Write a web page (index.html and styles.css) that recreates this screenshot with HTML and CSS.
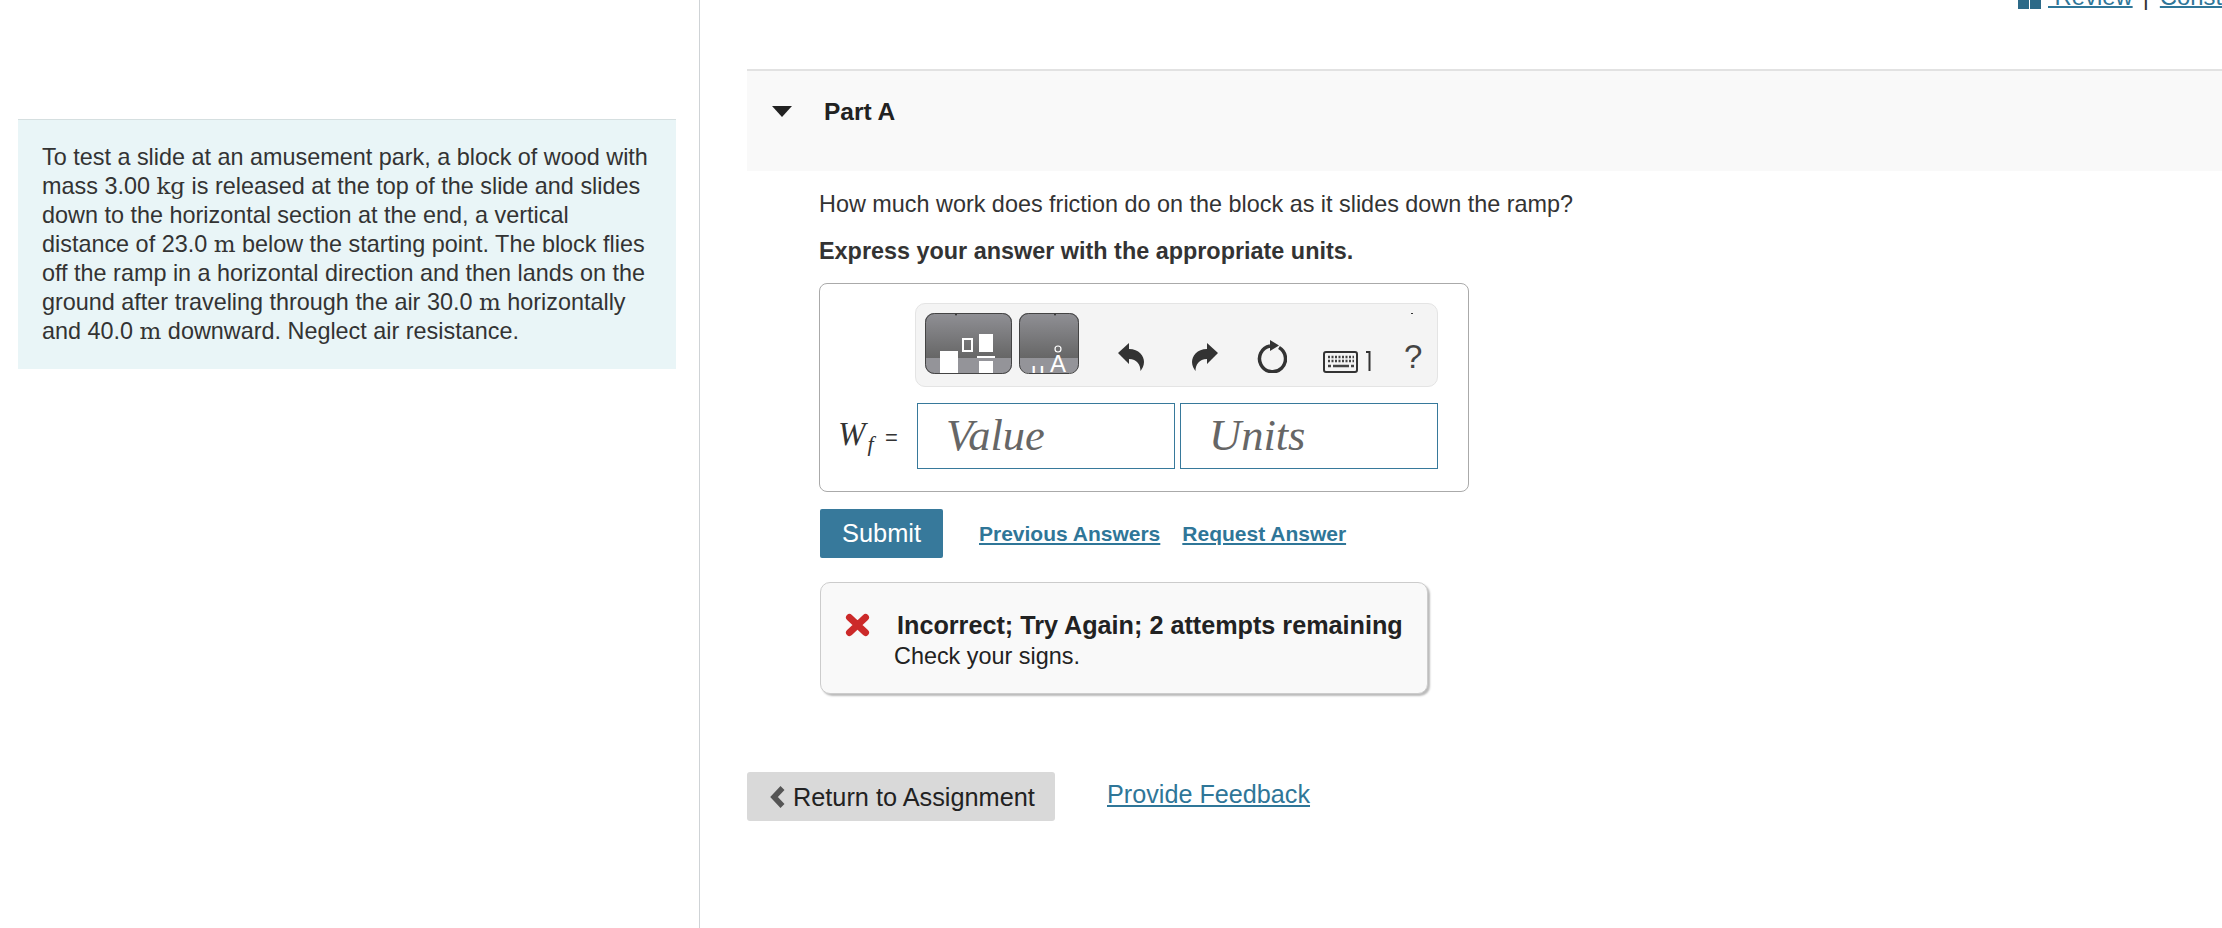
FILE: index.html
```html
<!DOCTYPE html>
<html lang="en">
<head>
  <meta charset="UTF-8" />
  <title>Part A</title>
  <link rel="stylesheet" href="styles.css">
</head>
<body>
  <div class="left-pane">
    <div class="intro">
      To test a slide at an amusement park, a block of wood with mass 3.00 <span class="unit">kg</span> is released at the top of the slide and slides down to the horizontal section at the end, a vertical distance of 23.0 <span class="unit">m</span> below the starting point. The block flies off the ramp in a horizontal direction and then lands on the ground after traveling through the air 30.0 <span class="unit">m</span> horizontally and 40.0 <span class="unit">m</span> downward. Neglect air resistance.
    </div>
  </div>

  <div class="right-pane">
    <div class="top-links">
      <svg class="book" width="23" height="9" viewBox="0 0 23 9"><path d="M0 0h11v9H0zM12 0h11v9H12z" fill="#2c6a88"/></svg>
      <a href="#">&nbsp;Review</a>
      <span class="sep">|</span>
      <a href="#">Constants</a>
    </div>

    <div class="part-head">
      <span class="caret"></span>
      <h2 class="part-title">Part A</h2>
    </div>

    <div class="part-body">
      <p class="question">How much work does friction do on the block as it slides down the ramp?</p>
      <p class="instruction">Express your answer with the appropriate units.</p>

      <div class="answer-box">
        <div class="toolbar">
          <svg class="palette" width="87" height="61" viewBox="0 0 87 61">
            <defs>
              <linearGradient id="grad1" x1="0" y1="0" x2="0" y2="1">
                <stop offset="0" stop-color="#909095"/>
                <stop offset="1" stop-color="#666666"/>
              </linearGradient>
            </defs>
            <rect width="87" height="61" rx="9" fill="#949499"/>
            <path d="M9 0h69a9 9 0 0 1 9 9v36H0V9a9 9 0 0 1 9-9z" fill="url(#grad1)"/>
            <rect x="15" y="38" width="18" height="23" fill="#fff"/>
            <rect x="38" y="26" width="9" height="12" fill="none" stroke="#fff" stroke-width="2"/>
            <rect x="54" y="21" width="14" height="18" fill="#fff"/>
            <rect x="52" y="43" width="18" height="2" fill="#fff"/>
            <rect x="54" y="48" width="14" height="13" fill="#fff"/>
            <circle cx="31" cy="1.5" r="1" fill="#333"/>
            <rect x="0.5" y="0.5" width="86" height="60" rx="9" fill="none" stroke="#444"/>
          </svg>
          <svg class="palette palette-units" width="60" height="61" viewBox="0 0 60 61">
            <defs>
              <clipPath id="clip2"><rect width="60" height="60" rx="9"/></clipPath>
            </defs>
            <g clip-path="url(#clip2)">
              <rect width="60" height="61" fill="#949499"/>
              <rect width="60" height="45" fill="url(#grad1)"/>
              <text class="palette-text" x="12" y="66">μ</text>
              <text class="palette-text" x="39" y="59" text-anchor="middle">A</text>
              <circle cx="39" cy="36" r="3" fill="none" stroke="#fff" stroke-width="1.200"/>
            </g>
            <circle cx="36" cy="1.5" r="1" fill="#333"/>
            <rect x="0.5" y="0.5" width="59" height="60" rx="9" fill="none" stroke="#444"/>
          </svg>
          <svg class="tool-undo" width="26" height="28" viewBox="0 0 26 28"><path d="M0 10L11 0V6C21 6 26 13 26 19C26 23 24 26 22.500 28C22.500 22 19 16 11 16V21Z" fill="#333"/></svg>
          <svg class="tool-redo" width="26" height="28" viewBox="0 0 26 28"><path d="M26 10L15 0V6C5 6 0 13 0 19C0 23 2 26 3.500 28C3.500 22 7 16 15 16V21Z" fill="#333"/></svg>
          <svg class="tool-reset" width="30" height="34" viewBox="0 0 30 34">
            <path d="M22 8.500A13 13 0 1 1 13 7" fill="none" stroke="#333" stroke-width="3.500"/>
            <path d="M13 1L22 6.500L13 12Z" fill="#333"/>
          </svg>
          <svg class="tool-keys" width="36" height="22" viewBox="0 0 36 22">
            <rect x="1" y="1" width="33" height="20" rx="2" fill="#f4f4f4" stroke="#333" stroke-width="2"/>
            <path d="M5 6h26M5 10h26" stroke="#444" stroke-width="2.400" stroke-dasharray="2 1.500"/>
            <path d="M5 15h3M10 15h16M28 15h3" stroke="#444" stroke-width="2.400"/>
          </svg>
          <svg class="tool-bracket" width="5" height="20" viewBox="0 0 5 20"><path d="M0 1h3.500V20" fill="none" stroke="#333" stroke-width="2"/></svg>
          <span class="tool-help">?</span>
          <span class="tool-dot"></span>
        </div>

        <div class="input-row">
          <label class="math-label"><i>W</i><i class="math-sub">f</i> <span class="eq">=</span></label>
          <input class="math-input" type="text" placeholder="Value">
          <input class="math-input" type="text" placeholder="Units">
        </div>
      </div>

      <div class="action-row">
        <button class="submit-btn">Submit</button>
        <a class="action-link" href="#">Previous Answers</a>
        <a class="action-link" href="#">Request Answer</a>
      </div>

      <div class="feedback">
        <svg class="x-icon" width="25" height="24" viewBox="0 0 25 24"><path d="M4.500 4.500L20.500 19.500M20.500 4.500L4.500 19.500" fill="none" stroke="#cc2a2a" stroke-width="7" stroke-linecap="round"/></svg>
        <div>
          <div class="feedback-title">Incorrect; Try Again; 2 attempts remaining</div>
          <div class="feedback-text">Check your signs.</div>
        </div>
      </div>
    </div>

    <div class="footer-row">
      <button class="return-btn">
        <svg width="15" height="22" viewBox="0 0 15 22"><path d="M12.500 2L4 11L12.500 20" fill="none" stroke="#555" stroke-width="5.500"/></svg>
        Return to Assignment
      </button>
      <a class="feedback-link" href="#">Provide Feedback</a>
    </div>
  </div>
</body>
</html>
```

FILE: styles.css
```css
* {
  box-sizing: border-box;
}

body {
  margin: 0;
  height: 100vh;
  overflow: hidden;
  display: flex;
  background-color: #fff;
  font-family: "Liberation Sans", Arial, sans-serif;
  font-size: 23.4px;
  line-height: 29px;
  color: #333;
}

a {
  color: #2f7698;
}

/* left column */
.left-pane {
  flex: 0 0 700px;
  padding: 119px 23px 0 18px;
  border-right: 1px solid #cfd3d6;
}

.intro {
  height: 250px;
  padding: 23px 20px 0 24px;
  background-color: #e9f5f7;
  border-top: 1px solid #d5dfe0;
}

.unit {
  font-family: "DejaVu Serif", serif;
  font-size: 23px;
  line-height: 0;
}

/* right column */
.right-pane {
  flex: 1;
  min-width: 0;
  overflow: hidden;
  padding-left: 47px;
}

.top-links {
  height: 11px;
  padding-left: 1271px;
  display: flex;
  align-items: flex-end;
  white-space: nowrap;
  overflow: hidden;
  font-size: 23.8px;
  line-height: 29px;
}

.top-links a {
  flex: none;
  text-decoration: underline;
  text-decoration-thickness: 2px;
}

.book {
  flex: none;
  margin-bottom: 2px;
  margin-right: 7px;
}

.sep {
  flex: none;
  margin: 0 11px 0 10px;
}

.part-head {
  margin-top: 58px;
  height: 102px;
  padding: 26px 0 0 25px;
  display: flex;
  align-items: flex-start;
  background-color: #f9f9f9;
  border-top: 2px solid #e2e2e2;
}

.caret {
  margin-top: 9px;
  width: 0;
  height: 0;
  border-left: 10px solid transparent;
  border-right: 10px solid transparent;
  border-top: 11px solid #222;
}

.part-title {
  margin: 0 0 0 32px;
  font-size: 24.5px;
  line-height: 29px;
  color: #222;
}

.part-body {
  padding: 19px 0 0 72px;
}

.question {
  margin: 0 0 18px;
}

.instruction {
  margin: 0 0 17px;
  font-weight: bold;
}

.answer-box {
  width: 650px;
  height: 209px;
  padding: 19px 30px 0 0;
  display: flex;
  flex-direction: column;
  align-items: flex-end;
  gap: 16px;
  border: 1px solid #aaa;
  border-radius: 8px;
}

.toolbar {
  position: relative;
  width: 523px;
  height: 84px;
  padding: 9px 0 0 9px;
  display: flex;
  align-items: flex-start;
  background-color: #f4f4f4;
  border: 1px solid #e4e4e4;
  border-radius: 10px;
}

.toolbar svg {
  flex: none;
}

.palette-units {
  margin-left: 7px;
}

.palette-text {
  font-family: "Liberation Sans", sans-serif;
  font-size: 24px;
  fill: #fff;
}

.tool-undo {
  margin: 30px 0 0 39px;
}

.tool-redo {
  margin: 30px 0 0 48px;
}

.tool-reset {
  margin: 26px 0 0 39px;
}

.tool-keys {
  margin: 38px 0 0 36px;
}

.tool-bracket {
  margin: 38px 0 0 7px;
}

.tool-help {
  margin: 26px 0 0 33px;
  font-size: 33px;
  line-height: 36px;
  color: #444;
}

.tool-dot {
  position: absolute;
  top: 9px;
  left: 495px;
  width: 2px;
  height: 1px;
  background-color: #333;
}

.input-row {
  width: 100%;
  padding-left: 18px;
  display: flex;
  align-items: center;
}

.math-label {
  flex: 1;
  font-family: "Liberation Serif", serif;
  font-size: 33px;
  color: #333;
}

.math-sub {
  margin-left: 2px;
  font-size: 22px;
  position: relative;
  top: 6px;
}

.eq {
  margin-left: 3px;
  font-family: "Liberation Sans", sans-serif;
  font-size: 22px;
}

.math-input {
  width: 258px;
  height: 66px;
  padding: 0 0 2px 28px;
  border: 1px solid #37799b;
  border-radius: 0;
  font-family: "Liberation Serif", serif;
  font-style: italic;
  font-size: 44.5px;
}

.math-input + .math-input {
  margin-left: 5px;
}

.math-input::placeholder {
  color: #666;
  opacity: 1;
}

.action-row {
  margin: 17px 0 0 1px;
  display: flex;
  align-items: center;
}

.submit-btn {
  width: 123px;
  height: 49px;
  padding: 0;
  background-color: #37799b;
  border: none;
  border-radius: 2px;
  color: #fff;
  font-family: inherit;
  font-size: 25.4px;
}

.action-link {
  margin-left: 22px;
  font-size: 21px;
  font-weight: bold;
}

.submit-btn + .action-link {
  margin-left: 36px;
}

.feedback {
  width: 608px;
  height: 112px;
  margin: 24px 0 0 1px;
  padding: 28px 0 0 24px;
  display: flex;
  align-items: flex-start;
  gap: 24px;
  background-color: #f9f9f9;
  border: 1px solid #ccc;
  border-radius: 10px;
  box-shadow: 2px 2px 2px #bbb;
  color: #222;
}

.x-icon {
  flex: none;
  margin-top: 2px;
}

.feedback-title {
  margin-left: 3px;
  font-size: 25.2px;
  font-weight: bold;
}

.feedback-text {
  margin-top: 2px;
  font-size: 23.4px;
}

.footer-row {
  margin-top: 78px;
  display: flex;
  align-items: flex-start;
}

.return-btn {
  width: 308px;
  height: 49px;
  padding: 2px 0 0 23px;
  display: flex;
  align-items: center;
  gap: 8px;
  background-color: #d9d9d9;
  border: none;
  border-radius: 3px;
  color: #222;
  font-family: inherit;
  font-size: 25.3px;
}

.return-btn svg {
  margin-top: -2px;
}

.feedback-link {
  margin: 8px 0 0 52px;
  font-size: 25.2px;
}
```
